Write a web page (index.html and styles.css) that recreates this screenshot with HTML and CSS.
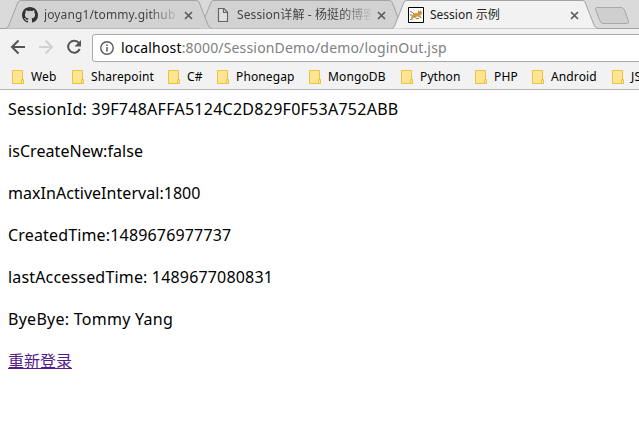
FILE: index.html
```html
<!DOCTYPE html>
<html lang="zh-CN">
<head>
<meta charset="utf-8">
<title>Session 示例</title>
<link rel="stylesheet" href="styles.css">
</head>
<body>
<svg class="defs" width="0" height="0">
  <symbol id="tab-shape" viewBox="0 0 206 29"><path d="M0 28.5Q2 28 3 25L12 2Q13 .5 15 .5H190Q192 .5 193 2L202 25Q203 28 206 28.5"/></symbol>
  <symbol id="close" viewBox="0 0 9 9"><path d="M1 1L8 8M8 1L1 8" fill="none" stroke="#5c5c5c" stroke-width="1.7"/></symbol>
  <symbol id="folder" viewBox="0 0 13 15"><path d="M.5 .5H10.5V9.5H11.5V13.5H.5Z" fill="#ffe591" stroke="#e9c343"/><path d="M9.5 13V9.5H11.5V13.5H9.5" fill="#ffe591" stroke="#e9c343"/></symbol>
</svg>
<header class="browser">
  <div class="tabs">
    <div class="tab first">
      <svg class="shape" width="206" height="29"><use href="#tab-shape"/></svg>
      <svg class="favicon" viewBox="0 0 16 16"><path fill="#333" d="M8 0C3.58 0 0 3.58 0 8c0 3.54 2.29 6.53 5.47 7.59.4.07.55-.17.55-.38v-1.49c-2.01.37-2.53-.49-2.69-.94-.09-.23-.48-.94-.82-1.13-.28-.15-.68-.52-.01-.53.63-.01 1.08.58 1.23.82.72 1.21 1.87.87 2.33.66.07-.52.28-.87.51-1.07-1.78-.2-3.64-.89-3.64-3.95 0-.87.31-1.59.82-2.15-.08-.2-.36-1.02.08-2.12 0 0 .67-.21 2.2.82A7.6 7.6 0 0 1 8 3.86c.68 0 1.36.09 2 .27 1.53-1.04 2.2-.82 2.2-.82.44 1.1.16 1.92.08 2.12.51.56.82 1.27.82 2.15 0 3.07-1.87 3.75-3.65 3.95.29.25.54.73.54 1.48v2.2c0 .21.15.46.55.38A8.01 8.01 0 0 0 16 8c0-4.42-3.58-8-8-8z"/></svg>
      <span class="title fade">joyang1/tommy.github</span>
      <svg class="close" width="9" height="9"><use href="#close"/></svg>
    </div>
    <div class="tab second">
      <svg class="shape" width="206" height="29"><use href="#tab-shape"/></svg>
      <svg class="favicon" viewBox="0 0 16 16"><path d="M3.5 1.5H9L12.5 5V14.5H3.5ZM8.5 1.5V5.5H12.5" fill="#e0e0e0" stroke="#666" stroke-width="1.2"/></svg>
      <span class="title fade">Session详解 - 杨挺的博客</span>
      <svg class="close" width="9" height="9"><use href="#close"/></svg>
    </div>
    <div class="tab active">
      <svg class="shape" width="206" height="29"><use href="#tab-shape"/></svg>
      <svg class="favicon" viewBox="0 0 16 16"><path d="M.5 .5H15.5V15.5H.5Z" fill="#fffef8" stroke="#000"/><path d="M4 8L7 6L10 6L10 3L11.500 4.500L13 3L14 7L12 8.500L14 11H12L10 9.500L7 10L4 12L3 11Z" fill="#d39a3c"/><path d="M2 4.500L4 5L6 7M2 8H4M2 12.500L5 12M6 9L8 11.500H11M11 5V6M13 5V6" fill="none" stroke="#777064" stroke-width=".9"/></svg>
      <span class="title">Session 示例</span>
      <svg class="close" width="9" height="9"><use href="#close"/></svg>
    </div>
    <svg class="new-tab" width="36" height="18" viewBox="0 0 36 18"><path d="M3 .5H27Q29 .5 30 2L34.500 14Q35 16.500 33 16.500H9Q7 16.500 6 14L1.500 2.500Q1 .5 3 .5Z" fill="#cfcfcf" stroke="#a9a9a9"/></svg>
  </div>
  <div class="toolbar">
    <svg class="nav" viewBox="0 0 16 16"><path d="M15 8H2.500M8.500 1.500L2 8L8.500 14.500" fill="none" stroke="#555" stroke-width="2"/></svg>
    <svg class="nav" viewBox="0 0 16 16"><path d="M1 8H13.500M7.500 1.500L14 8L7.500 14.500" fill="none" stroke="#d1d1d1" stroke-width="2"/></svg>
    <svg class="nav" viewBox="0 0 16 16"><path d="M13 4.200A6 6 0 1 0 13.700 10" fill="none" stroke="#555" stroke-width="2"/><path d="M15 1V7.500H8.500Z" fill="#555"/></svg>
    <div class="address">
      <svg class="info" viewBox="0 0 14 14"><circle cx="7" cy="7" r="6.200" fill="none" stroke="#5a5a5a" stroke-width="1.400"/><path d="M7 6V10.500M7 3.500V5" stroke="#5a5a5a" stroke-width="1.500"/></svg>
      <span class="url">localhost<span class="path">:8000/SessionDemo/demo/loginOut.jsp</span></span>
    </div>
  </div>
  <nav class="bookmarks">
    <a><svg><use href="#folder"/></svg>Web</a>
    <a><svg><use href="#folder"/></svg>Sharepoint</a>
    <a><svg><use href="#folder"/></svg>C#</a>
    <a><svg><use href="#folder"/></svg>Phonegap</a>
    <a><svg><use href="#folder"/></svg>MongoDB</a>
    <a><svg><use href="#folder"/></svg>Python</a>
    <a><svg><use href="#folder"/></svg>PHP</a>
    <a><svg><use href="#folder"/></svg>Android</a>
    <a><svg><use href="#folder"/></svg>JS</a>
  </nav>
</header>
<main>
  <p class="session">SessionId: 39F748AFFA5124C2D829F0F53A752ABB</p>
  <p class="created-new">isCreateNew:false</p>
  <p class="interval">maxInActiveInterval:1800</p>
  <p class="created">CreatedTime:1489676977737</p>
  <p class="accessed">lastAccessedTime: 1489677080831</p>
  <p class="bye">ByeBye: Tommy Yang</p>
  <p><a class="login" href="#">重新登录</a></p>
</main>
</body>
</html>
```
FILE: styles.css
```css
* { box-sizing: border-box; }
body { margin: 0; height: 432px; overflow: hidden; background: #fff; color: #000; font-family: "Noto Sans", "Noto Sans CJK SC", sans-serif; }
svg { display: block; flex: none; }
.defs { position: absolute; }
.browser { height: 90px; background: #f2f2f2; border-bottom: 1px solid #b6b6b6; overflow: hidden; }
.tabs { display: flex; height: 29px; padding-left: 6px; background: #dadada; border-bottom: 1px solid #a3a3a3; }
.tab { position: relative; display: flex; align-items: center; width: 205px; height: 29px; flex: none; padding: 1px 18px 0 16px; font-size: 12px; color: #444; }
.tab + .tab { margin-left: -12px; }
.tab > * { position: relative; }
.tab .shape { position: absolute; left: 0; top: 0; fill: #d2d2d2; stroke: #a3a3a3; }
.tab.first { z-index: 2; }
.tab.second { z-index: 1; }
.tab.active { z-index: 3; color: #222; }
.tab.active .shape { fill: #f2f2f2; }
.favicon { width: 16px; height: 16px; }
.title { width: 134px; margin: 0 6px 0 6px; line-height: 18px; overflow: hidden; white-space: nowrap; flex: none; }
.first .title { letter-spacing: .12px; }
.second .title { letter-spacing: .1px; }
.fade { -webkit-mask-image: linear-gradient(90deg, #000 104px, transparent 136px); mask-image: linear-gradient(90deg, #000 104px, transparent 136px); }
.new-tab { margin: 7px 0 0 -3px; }
.toolbar { display: flex; align-items: center; height: 36px; padding: 0 0 0 10px; }
.nav { width: 16px; height: 16px; margin-right: 12px; }
.address { display: flex; align-items: center; flex: 1; height: 28px; margin: 1px -4px 0 -2px; padding-left: 7px; background: #fff; border: 1px solid #a9a9a9; border-radius: 3px; }
.info { width: 14px; height: 14px; }
.url { margin-left: 7px; font-size: 14px; line-height: 24px; letter-spacing: .17px; white-space: nowrap; }
.path { color: #808080; }
.bookmarks { display: grid; grid-template-columns: 60px 96px 49px 92px 92px 74px 57px 80px 60px; height: 24px; padding-left: 12px; align-items: center; font-size: 12px; letter-spacing: .12px; }
.bookmarks a { display: flex; align-items: center; gap: 6px; line-height: 20px; white-space: nowrap; }
.bookmarks svg { width: 13px; height: 15px; }
main { padding: 8px 8px 0; font-size: 16px; }
p { margin: 0 0 20px; height: 22px; line-height: 22px; white-space: nowrap; }
.session { letter-spacing: .265px; }
.created-new { letter-spacing: .06px; }
.interval { letter-spacing: .04px; }
.created { letter-spacing: .16px; }
.accessed { letter-spacing: .17px; }
.bye { letter-spacing: .27px; }
.login { color: #551a8b; text-decoration: underline; }
```
